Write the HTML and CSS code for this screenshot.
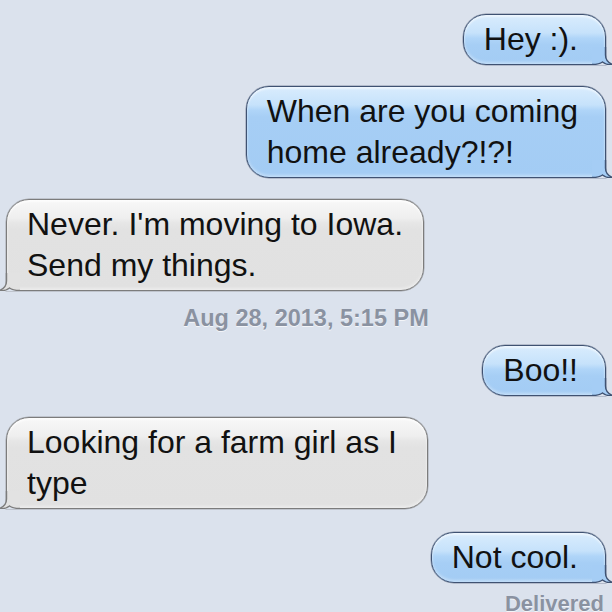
FILE: index.html
```html
<!DOCTYPE html>
<html>
<head>
<meta charset="utf-8">
<link rel="stylesheet" href="styles.css">
</head>
<body>
<div class="thread">
  <div class="bubble out first">Hey :).
    <svg class="tail" width="22" height="24" viewBox="0 0 22 24"><rect x="0" y="18" width="22" height="6" class="bgfill"/><path class="tfill" d="M13.5,6 L13.5,14 C13.5,19 16,22 21,23.5 C17,24 13,23 10.5,21 C8,23 5,23.5 0,23.5 L0,6 Z"/><path class="tline" d="M13.5,6 L13.5,14 C13.5,19 16,22 21,23.5 C17,24 13,23 10.5,21 C8,23 5,23.5 0,23.5"/></svg>
  </div>
  <div class="bubble out">When are you coming<br>home already?!?!
    <svg class="tail" width="22" height="24" viewBox="0 0 22 24"><rect x="0" y="18" width="22" height="6" class="bgfill"/><path class="tfill" d="M13.5,6 L13.5,14 C13.5,19 16,22 21,23.5 C17,24 13,23 10.5,21 C8,23 5,23.5 0,23.5 L0,6 Z"/><path class="tline" d="M13.5,6 L13.5,14 C13.5,19 16,22 21,23.5 C17,24 13,23 10.5,21 C8,23 5,23.5 0,23.5"/></svg>
  </div>
  <div class="bubble in">Never. I'm moving to Iowa.<br>Send my things.
    <svg class="tail" width="22" height="24" viewBox="0 0 22 24"><rect x="0" y="18" width="22" height="6" class="bgfill"/><path class="tfill" d="M13.5,6 L13.5,14 C13.5,19 16,22 21,23.5 C17,24 13,23 10.5,21 C8,23 5,23.5 0,23.5 L0,6 Z"/><path class="tline" d="M13.5,6 L13.5,14 C13.5,19 16,22 21,23.5 C17,24 13,23 10.5,21 C8,23 5,23.5 0,23.5"/></svg>
  </div>
  <div class="stamp">Aug 28, 2013, 5:15 PM</div>
  <div class="bubble out after-stamp">Boo!!
    <svg class="tail" width="22" height="24" viewBox="0 0 22 24"><rect x="0" y="18" width="22" height="6" class="bgfill"/><path class="tfill" d="M13.5,6 L13.5,14 C13.5,19 16,22 21,23.5 C17,24 13,23 10.5,21 C8,23 5,23.5 0,23.5 L0,6 Z"/><path class="tline" d="M13.5,6 L13.5,14 C13.5,19 16,22 21,23.5 C17,24 13,23 10.5,21 C8,23 5,23.5 0,23.5"/></svg>
  </div>
  <div class="bubble in wide">Looking for a farm girl as I<br>type
    <svg class="tail" width="22" height="24" viewBox="0 0 22 24"><rect x="0" y="18" width="22" height="6" class="bgfill"/><path class="tfill" d="M13.5,6 L13.5,14 C13.5,19 16,22 21,23.5 C17,24 13,23 10.5,21 C8,23 5,23.5 0,23.5 L0,6 Z"/><path class="tline" d="M13.5,6 L13.5,14 C13.5,19 16,22 21,23.5 C17,24 13,23 10.5,21 C8,23 5,23.5 0,23.5"/></svg>
  </div>
  <div class="bubble out last">Not cool.
    <svg class="tail" width="22" height="24" viewBox="0 0 22 24"><rect x="0" y="18" width="22" height="6" class="bgfill"/><path class="tfill" d="M13.5,6 L13.5,14 C13.5,19 16,22 21,23.5 C17,24 13,23 10.5,21 C8,23 5,23.5 0,23.5 L0,6 Z"/><path class="tline" d="M13.5,6 L13.5,14 C13.5,19 16,22 21,23.5 C17,24 13,23 10.5,21 C8,23 5,23.5 0,23.5"/></svg>
  </div>
  <div class="delivered">Delivered</div>
</div>
</body>
</html>
```
FILE: styles.css
```css
html, body {
  margin: 0;
  padding: 0;
  background: #dbe2ed;
  overflow: hidden;
}
body {
  width: 612px;
  height: 612px;
  font-family: "Liberation Sans", Arial, sans-serif;
}
.thread {
  display: flex;
  flex-direction: column;
  padding: 14px 6px 0 6px;
}
.bubble {
  position: relative;
  width: fit-content;
  font-size: 32px;
  line-height: 41px;
  color: #111;
  border: 1px solid;
  border-radius: 23px;
  padding: 4px 20px;
  margin-top: 21px;
  white-space: nowrap;
}
.bubble.first { margin-top: 0; }
.bubble.after-stamp { margin-top: 0; }
.bubble.last { margin-top: 23px; }
.bubble.wide { padding-right: 30px; }
.bubble.out {
  align-self: flex-end;
  padding-right: 27px;
  border-color: #3f5272;
  border-bottom-right-radius: 0;
  background: linear-gradient(to bottom, #d9ecfd 0px, #c6e2fb 18px, #b0d5f8 23px, #a6cef5 30px, #a3ccf4 100%);
  box-shadow: inset 0 2px 2px rgba(255,255,255,0.55), inset 0 -2px 3px rgba(255,255,255,0.35), 0 0 0 0.5px rgba(40,55,85,0.45);
}
.bubble.in {
  align-self: flex-start;
  padding-left: 20px;
  border-color: #7c7c7c;
  border-bottom-left-radius: 0;
  background: linear-gradient(to bottom, #f8f8f8 0px, #efefef 18px, #e6e6e6 23px, #e2e2e2 30px, #e1e1e1 100%);
  box-shadow: inset 0 2px 2px rgba(255,255,255,0.7), inset 0 -2px 3px rgba(255,255,255,0.4), 0 0 0 0.5px rgba(80,80,80,0.4);
}
.tail {
  position: absolute;
  bottom: -1px;
  display: block;
}
.out .tail { right: -9px; }
.in .tail { left: -9px; transform: scaleX(-1); }
.bgfill { fill: #dbe2ed; }
.tline { fill: none; stroke-width: 1.4; }
.out .tfill { fill: #a5cdf5; }
.out .tline { stroke: #3f5272; }
.in .tfill { fill: #e2e2e2; }
.in .tline { stroke: #7c7c7c; }
.stamp {
  height: 54px;
  line-height: 54px;
  text-align: center;
  font-size: 23.5px;
  font-weight: bold;
  color: #8a92a1;
  text-shadow: 0 1px 0 rgba(255,255,255,0.7);
}
.delivered {
  align-self: flex-end;
  margin-top: 8px;
  margin-right: 2px;
  font-size: 22px;
  line-height: 26px;
  font-weight: bold;
  color: #8a92a1;
  text-shadow: 0 1px 0 rgba(255,255,255,0.7);
}
```
